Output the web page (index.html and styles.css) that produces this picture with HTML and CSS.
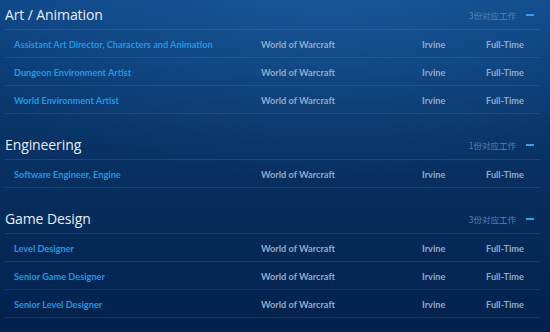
FILE: index.html
```html
<!DOCTYPE html>
<html>
<head>
<meta charset="utf-8">
<link rel="stylesheet" href="styles.css">
</head>
<body>
<div class="page">
  <section class="group">
    <div class="group-head">
      <h2 class="group-title">Art / Animation</h2>
      <div class="group-meta"><span class="count">3份对应工作</span><span class="dash"></span></div>
    </div>
    <div class="row"><span class="title">Assistant Art Director, Characters and Animation</span><span class="cell">World of Warcraft</span><span class="cell">Irvine</span><span class="cell">Full-Time</span></div>
    <div class="row"><span class="title">Dungeon Environment Artist</span><span class="cell">World of Warcraft</span><span class="cell">Irvine</span><span class="cell">Full-Time</span></div>
    <div class="row"><span class="title">World Environment Artist</span><span class="cell">World of Warcraft</span><span class="cell">Irvine</span><span class="cell">Full-Time</span></div>
  </section>
  <section class="group">
    <div class="group-head">
      <h2 class="group-title">Engineering</h2>
      <div class="group-meta"><span class="count">1份对应工作</span><span class="dash"></span></div>
    </div>
    <div class="row"><span class="title">Software Engineer, Engine</span><span class="cell">World of Warcraft</span><span class="cell">Irvine</span><span class="cell">Full-Time</span></div>
  </section>
  <section class="group">
    <div class="group-head">
      <h2 class="group-title">Game Design</h2>
      <div class="group-meta"><span class="count">3份对应工作</span><span class="dash"></span></div>
    </div>
    <div class="row"><span class="title">Level Designer</span><span class="cell">World of Warcraft</span><span class="cell">Irvine</span><span class="cell">Full-Time</span></div>
    <div class="row"><span class="title">Senior Game Designer</span><span class="cell">World of Warcraft</span><span class="cell">Irvine</span><span class="cell">Full-Time</span></div>
    <div class="row"><span class="title">Senior Level Designer</span><span class="cell">World of Warcraft</span><span class="cell">Irvine</span><span class="cell">Full-Time</span></div>
  </section>
</div>
</body>
</html>
```

FILE: styles.css
```css
html, body {
  margin: 0;
  padding: 0;
}
body {
  width: 550px;
  height: 332px;
  overflow: hidden;
  background:
    radial-gradient(ellipse 420px 200px at 330px -20px, rgba(40, 110, 180, 0.45), rgba(40, 110, 180, 0) 100%),
    linear-gradient(180deg, #0d4584 0%, #083466 40%, #03214c 100%);
  font-family: Lato, "Open Sans", sans-serif;
}
.page {
  display: flex;
  flex-direction: column;
  gap: 16px;
  padding: 0 10px 0 5px;
}
.group-head {
  height: 30px;
  display: flex;
  align-items: center;
  justify-content: space-between;
  border-bottom: 1px solid rgba(120, 170, 220, 0.18);
  box-sizing: border-box;
}
.group-title {
  margin: 0;
  font-family: "Open Sans", sans-serif;
  font-weight: 400;
  font-size: 14px;
  color: #e6edf5;
  letter-spacing: -0.1px;
}
.group-meta {
  display: flex;
  align-items: center;
  gap: 10px;
  padding-right: 6px;
}
.count {
  font-family: "Noto Sans CJK SC", sans-serif;
  font-size: 8.5px;
  color: #5d80ab;
}
.dash {
  width: 8px;
  height: 2px;
  background: #2aa2ee;
}
.row {
  height: 28px;
  box-sizing: border-box;
  border-bottom: 1px solid rgba(120, 170, 220, 0.15);
  display: grid;
  grid-template-columns: 247px 161px 64px 1fr;
  align-items: center;
  padding-left: 9px;
  padding-top: 1px;
  font-size: 9.2px;
  font-weight: 700;
}
.title {
  color: #1d9ae6;
}
.cell {
  color: #93a9c6;
}
```
